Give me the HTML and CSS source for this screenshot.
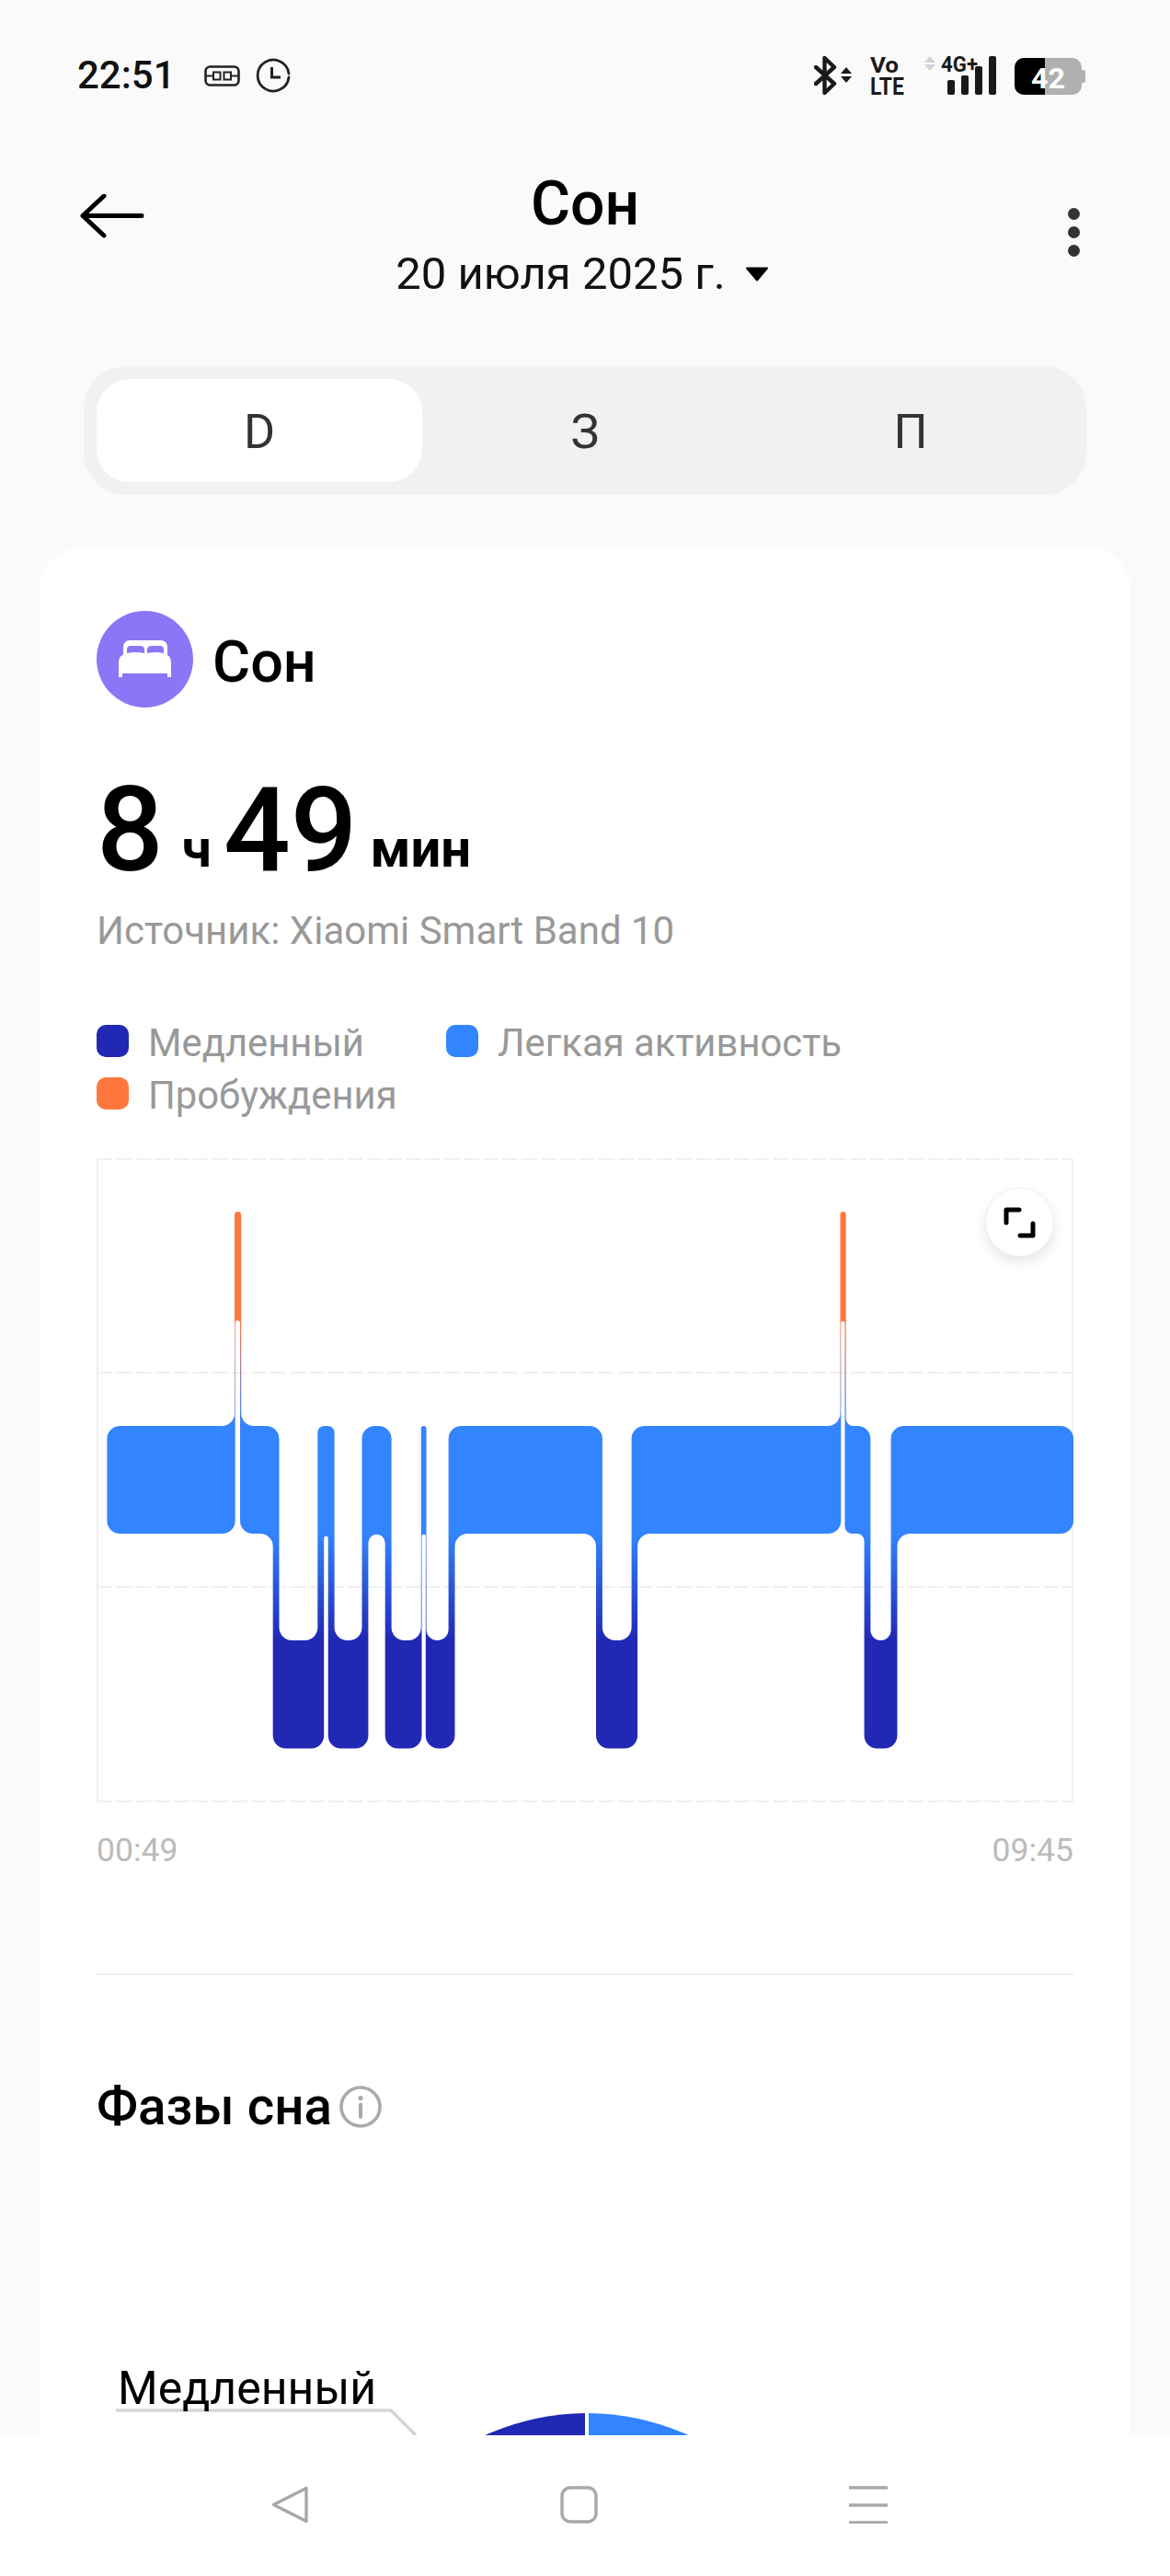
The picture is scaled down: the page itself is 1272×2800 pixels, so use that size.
FILE: index.html
```html
<!DOCTYPE html>
<html lang="ru">

<head>
  <meta charset="utf-8">
  <meta name="viewport" content="width=device-width, initial-scale=1">
  <title>Сон</title>
  <link rel="stylesheet" href="styles.css">
</head>

<body>
  <main class="screen">
    <div class="status">
      <div class="status-left">
        <span class="time">22:51</span>
        <svg class="plug" viewBox="221 71 39 23" width="39" height="23">
          <rect x="222.5" y="72.5" width="36" height="20" rx="5" fill="none" stroke="#222" stroke-width="2.6"/>
          <path d="M223 82.5H231M231 78.500H238.500V86.500H231ZM242.500 78.500H250V86.500H242.500ZM250 82.500H258" fill="none" stroke="#222" stroke-width="2"/>
        </svg>
        <svg class="clock" viewBox="278 63 38 38" width="38" height="38">
          <path d="M314 84A17 17 0 1 1 314 80" fill="none" stroke="#222" stroke-width="2.8" stroke-linecap="round"/>
          <path d="M295.5 73V84H305" fill="none" stroke="#222" stroke-width="3"/>
        </svg>
      </div>
      <svg class="status-right" viewBox="885 55 295 54" width="295" height="54">
        <path d="M887 73L907 91L896.5 101V63L907 73L887 91" fill="none" stroke="#1a1a1a" stroke-width="4.4" stroke-linejoin="round" stroke-linecap="round"/>
        <path d="M920 73L926 80H914ZM920 90L926 83H914Z" fill="#1a1a1a"/>
        <text class="st-text" x="946" y="79" font-size="24" textLength="31" lengthAdjust="spacingAndGlyphs">Vo</text>
        <text class="st-text" x="946" y="103" font-size="26" textLength="37" lengthAdjust="spacingAndGlyphs">LTE</text>
        <path d="M1011 61L1017 68H1005ZM1011 77L1017 70H1005Z" fill="#d2d2d2"/>
        <text class="st-text" x="1023" y="78" font-size="24" textLength="40" lengthAdjust="spacingAndGlyphs">4G+</text>
        <rect x="1030" y="87" width="8" height="16" rx="2" fill="#1a1a1a"/>
        <rect x="1045" y="82" width="8" height="21" rx="2" fill="#1a1a1a"/>
        <rect x="1060" y="72" width="8" height="31" rx="2" fill="#1a1a1a"/>
        <rect x="1075" y="61" width="8" height="42" rx="2" fill="#1a1a1a"/>
        <rect x="1103" y="63" width="73" height="40" rx="10" fill="#b0b0b0"/>
        <rect x="1175" y="76" width="5" height="14" rx="2" fill="#b0b0b0"/>
        <path d="M1136 63H1113A10 10 0 0 0 1103 73V93A10 10 0 0 0 1113 103H1136Z" fill="#000"/>
        <text class="st-text st-batt" x="1121" y="96" font-size="31" textLength="37" lengthAdjust="spacingAndGlyphs">42</text>
      </svg>
    </div>

    <header class="topbar">
      <svg class="back" viewBox="0 0 70 48" width="70" height="48">
        <path d="M26 2L3 23.5L26 45M3 23.5H67" fill="none" stroke="#000" stroke-width="5" stroke-linecap="round" stroke-linejoin="round"/>
      </svg>
      <div class="topbar-mid">
        <h1 class="title">Сон</h1>
        <div class="date">
          <span>20 июля 2025 г.</span>
          <svg viewBox="0 0 26 16" width="26" height="16"><path d="M2 1.500H24L13 14.500Z" fill="#000" stroke="#000" stroke-width="2" stroke-linejoin="round"/></svg>
        </div>
      </div>
      <div class="dots"><i></i><i></i><i></i></div>
    </header>

    <nav class="tabs">
      <div class="tab tab-on">D</div>
      <div class="tab">З</div>
      <div class="tab">П</div>
    </nav>

    <section class="card">
      <div class="card-head">
        <div class="bed">
          <svg viewBox="0 0 105 105" width="105" height="105">
            <path d="M29 48V39a7 7 0 0 1 7-7H70a7 7 0 0 1 7 7V48Z" fill="#fff"/>
            <path d="M33 46V42q0-4 4-4H47q5 0 5 4V46Q42 44 33 46ZM55 46V42q0-4 5-4H69q4 0 4 4V46Q64 44 55 46Z" fill="#8b76f7"/>
            <path d="M24 56q0-9 9-9H72q9 0 9 9V72H77V68H28V72H24Z" fill="#fff"/>
          </svg>
        </div>
        <h2 class="card-title">Сон</h2>
      </div>

      <div class="dur"><span class="dur-num">8</span><span class="dur-unit">ч</span><span class="dur-num dur-num2">49</span><span class="dur-unit dur-unit2">мин</span></div>
      <p class="source">Источник: Xiaomi Smart Band 10</p>

      <ul class="legend">
        <li><i class="sw sw-deep"></i>Медленный</li>
        <li><i class="sw sw-light"></i>Легкая активность</li>
        <li><i class="sw sw-awake"></i>Пробуждения</li>
      </ul>

      <div class="chart">
        <svg viewBox="105 1260 1062 700" width="1062" height="700">
          <defs>
            <linearGradient id="stages" gradientUnits="userSpaceOnUse" x1="0" y1="1318" x2="0" y2="1901">
              <stop offset="0.2" stop-color="#ff773d"/>
              <stop offset="0.4" stop-color="#3384ff"/>
              <stop offset="0.6" stop-color="#3384ff"/>
              <stop offset="0.8" stop-color="#2128b4"/>
            </linearGradient>
          </defs>
          <path class="grid-dash" d="M105 1261H1167M105 1493H1167M105 1726H1167M105 1959H1167"/>
          <path class="grid-side" d="M106 1260V1960M1166 1260V1960"/>
          <path fill="url(#stages)" d="M116.4 1565A14 14 0 0 1 130.4 1551H241A14 14 0 0 0 255 1537V1321.6A3.6 3.6 0 0 1 262.2 1321.6V1537A14 14 0 0 0 276.2 1551H289.5A14 14 0 0 1 303.5 1565V1770A14 14 0 0 0 317.5 1784H331.3A14 14 0 0 0 345.3 1770V1558A7 7 0 0 1 352.3 1551H356.6A7 7 0 0 1 363.6 1558V1770A14 14 0 0 0 377.6 1784H379.5A14 14 0 0 0 393.5 1770V1565A14 14 0 0 1 407.5 1551H411.6A14 14 0 0 1 425.6 1565V1770A14 14 0 0 0 439.6 1784H443.8A14 14 0 0 0 457.8 1770V1553.8A2.85 2.85 0 0 1 463.5 1553.8V1772A12 12 0 0 0 475.5 1784A12 12 0 0 0 487.6 1772V1565A14 14 0 0 1 501.6 1551H640.9A14 14 0 0 1 654.9 1565V1770A14 14 0 0 0 668.9 1784H672.6A14 14 0 0 0 686.6 1770V1565A14 14 0 0 1 700.6 1551H899.5A14 14 0 0 0 913.5 1537V1321A3.1 3.1 0 0 1 919.7 1321V1543A8 8 0 0 0 927.7 1551H932.4A14 14 0 0 1 946.4 1565V1773A11 11 0 0 0 957.5 1784A11 11 0 0 0 968.6 1773V1565A14 14 0 0 1 982.6 1551H1153A14 14 0 0 1 1167 1565V1654A14 14 0 0 1 1153 1668H989.5A14 14 0 0 0 975.5 1682V1887.5A14 14 0 0 1 961.5 1901.5H953.6A14 14 0 0 1 939.6 1887.5V1676A8 8 0 0 0 931.6 1668H926.5A8 8 0 0 1 918.5 1660V1439A2.1 2.1 0 0 0 914.3 1439V1654A14 14 0 0 1 900.3 1668H707.1A14 14 0 0 0 693.1 1682V1887.5A14 14 0 0 1 679.1 1901.5H662A14 14 0 0 1 648 1887.5V1682A14 14 0 0 0 634 1668H508.5A14 14 0 0 0 494.5 1682V1887.5A14 14 0 0 1 480.5 1901.5H476.8A14 14 0 0 1 462.8 1887.5V1671A2.15 2.15 0 0 0 458.5 1671V1887.5A14 14 0 0 1 444.5 1901.5H432.7A14 14 0 0 1 418.7 1887.5V1678A9.15 9.15 0 0 0 400.4 1678V1887.5A14 14 0 0 1 386.4 1901.5H370.7A14 14 0 0 1 356.7 1887.5V1673A2.25 2.25 0 0 0 352.2 1673V1887.5A14 14 0 0 1 338.2 1901.5H310.7A14 14 0 0 1 296.7 1887.5V1682A14 14 0 0 0 282.7 1668H275A14 14 0 0 1 261 1654V1439A2.65 2.65 0 0 0 255.7 1439V1654A14 14 0 0 1 241.7 1668H130.4A14 14 0 0 1 116.4 1654Z"/>
        </svg>
        <button class="expand">
          <svg viewBox="1090 1311 37 36" width="37" height="36">
            <path d="M1094 1329V1315H1108M1123 1330V1343H1109" fill="none" stroke="#000" stroke-width="5" stroke-linecap="round" stroke-linejoin="round"/>
          </svg>
        </button>
      </div>
      <div class="chart-times"><span>00:49</span><span>09:45</span></div>

      <hr class="divider">

      <div class="phases-head">
        <h3>Фазы сна</h3>
        <svg viewBox="0 0 46 46" width="46" height="46">
          <circle cx="23" cy="23" r="21" fill="none" stroke="#aaa" stroke-width="3.6"/>
          <circle cx="23" cy="13.5" r="2.6" fill="#aaa"/>
          <path d="M23 20.5V34" stroke="#aaa" stroke-width="4" stroke-linecap="round"/>
        </svg>
      </div>

      <div class="phases">
        <svg viewBox="105 2321 1062 400" width="1062" height="400">
          <path d="M636 2890V2624A266 266 0 0 0 372 2890Z" fill="#2128b4"/>
          <path d="M640 2890V2624A266 266 0 0 1 904 2890Z" fill="#3384ff"/>
          <path d="M126 2621H425L452 2648" fill="none" stroke="#d5d5d5" stroke-width="3.5"/>
        </svg>
        <span class="phase-label">Медленный</span>
      </div>
    </section>
  </main>

  <footer class="navbar">
    <svg viewBox="0 0 40 41" width="40" height="41"><path d="M38 2.5V38.5L2.500 20.500Z" fill="none" stroke="#a8a8a8" stroke-width="3.4" stroke-linejoin="round"/></svg>
    <svg viewBox="0 0 41 41" width="41" height="41"><rect x="2" y="2" width="37" height="37" rx="9" fill="none" stroke="#a8a8a8" stroke-width="3.4"/></svg>
    <svg viewBox="0 0 42 41" width="42" height="41"><path d="M0 2H42M0 21H42M0 40H42" stroke="#a8a8a8" stroke-width="3.6"/></svg>
  </footer>
</body>

</html>
```

FILE: styles.css
```css
html {
  background-color: #fafafa;
  color: #000000;
}

body {
  margin: 0;
  width: 1272px;
  height: 2800px;
  display: flex;
  flex-direction: column;
  overflow: hidden;
  font-family: Roboto, "Noto Sans", sans-serif;
}

h1, h2, h3, p, ul {
  margin: 0;
  padding: 0;
}

.screen {
  flex: 1;
  min-height: 0;
  overflow: hidden;
}

/* status bar */
.status {
  display: flex;
  justify-content: space-between;
  align-items: center;
  height: 44px;
  padding: 60px 92px 0 84px;
}

.status-left {
  display: flex;
  align-items: center;
}

.time {
  font-size: 42px;
  font-weight: 500;
  line-height: 44px;
  color: #111;
}

.plug {
  margin-left: 31px;
}

.clock {
  margin-left: 17px;
}

.st-text {
  font-family: Roboto, sans-serif;
  font-weight: 700;
  fill: #1a1a1a;
}

.st-batt {
  fill: #fff;
}

/* title */
.topbar {
  display: grid;
  grid-template-columns: 1fr auto 1fr;
  padding: 80px 87px 0;
}

.back {
  margin-top: 27px;
}

.topbar-mid {
  text-align: center;
}

.title {
  font-size: 66px;
  font-weight: 500;
  line-height: 76px;
}

.date {
  display: flex;
  align-items: center;
  gap: 21px;
  margin: 10px 6px 0 0;
  font-size: 49px;
  line-height: 56px;
  color: #111;
}

.dots {
  justify-self: end;
  display: flex;
  flex-direction: column;
  gap: 7px;
  margin: 42px 11px 0 0;
}

.dots i {
  width: 13px;
  height: 13px;
  border-radius: 50%;
  background: #333;
}

/* day/week/month */
.tabs {
  display: flex;
  height: 112px;
  margin: 72px 91px 0;
  padding: 14px;
  border-radius: 46px;
  background: #f1f1f1;
}

.tab {
  flex: 1;
  display: flex;
  align-items: center;
  justify-content: center;
  padding-top: 2px;
  font-size: 52px;
  color: #333;
  border-radius: 36px;
}

.tab-on {
  background: #fff;
}

/* card */
.card {
  margin: 56px 43px 0;
  padding: 70px 62px 0;
  background: #fff;
  border-radius: 48px;
}

.card-head {
  display: flex;
  align-items: center;
  gap: 21px;
}

.bed {
  width: 105px;
  height: 105px;
  border-radius: 50%;
  background: #8b76f7;
}

.bed svg {
  display: block;
}

.card-title {
  font-size: 63px;
  font-weight: 500;
  line-height: 72px;
  padding-top: 6px;
}

.dur {
  height: 130px;
  margin-top: 68px;
  line-height: 130px;
  white-space: nowrap;
}

.dur-num {
  font-size: 128px;
  font-weight: 500;
}

.dur-num2 {
  margin-left: 13px;
}

.dur-unit {
  margin-left: 20px;
  font-size: 58px;
  font-weight: 700;
  vertical-align: 4px;
}

.dur-unit2 {
  margin-left: 14px;
}

.source {
  margin-top: 20px;
  font-size: 42px;
  line-height: 50px;
  color: #999;
}

.legend {
  display: flex;
  flex-wrap: wrap;
  gap: 11px 89px;
  margin-top: 72px;
  list-style-type: none;
}

.legend li {
  display: flex;
  align-items: flex-start;
  gap: 21px;
  height: 46px;
  font-size: 41.8px;
  line-height: 50px;
  color: #999;
}

.sw {
  width: 35px;
  height: 35px;
  margin-top: 5px;
  border-radius: 10px;
}

.sw-deep {
  background: #2128b4;
}

.sw-light {
  background: #3384ff;
}

.sw-awake {
  background: #ff773d;
}

.chart {
  position: relative;
  height: 700px;
  margin-top: 47px;
}

.chart > svg {
  display: block;
}

.grid-dash {
  fill: none;
  stroke: #f0f0f0;
  stroke-width: 2;
  stroke-dasharray: 17 4;
}

.grid-side {
  fill: none;
  stroke: #f0f0f0;
  stroke-width: 2;
}

.expand {
  position: absolute;
  top: 32px;
  right: 21px;
  display: flex;
  align-items: center;
  justify-content: center;
  width: 75px;
  height: 75px;
  padding: 0;
  border: 1px solid #f0f0f0;
  border-radius: 50%;
  background: #fff;
  box-shadow: 0 6px 14px rgba(0, 0, 0, 0.1);
}

.chart-times {
  display: flex;
  justify-content: space-between;
  margin-top: 32px;
  font-size: 35.5px;
  line-height: 40px;
  color: #bbb;
}

.divider {
  height: 2px;
  margin: 114px 0 0;
  border: 0;
  background: #eee;
}

.phases-head {
  display: flex;
  align-items: center;
  gap: 8px;
  margin-top: 113px;
}

.phases-head h3 {
  font-size: 56.5px;
  font-weight: 500;
  line-height: 60px;
}

.phases {
  position: relative;
  height: 400px;
  padding-bottom: 100px;
}

.phases svg {
  display: block;
}

.phase-label {
  position: absolute;
  left: 23px;
  top: 246px;
  font-size: 50px;
  line-height: 60px;
}

/* android nav */
.navbar {
  display: flex;
  justify-content: space-between;
  align-items: flex-start;
  height: 98px;
  padding: 55px 307px 0 295px;
  background: #fff;
}
```
